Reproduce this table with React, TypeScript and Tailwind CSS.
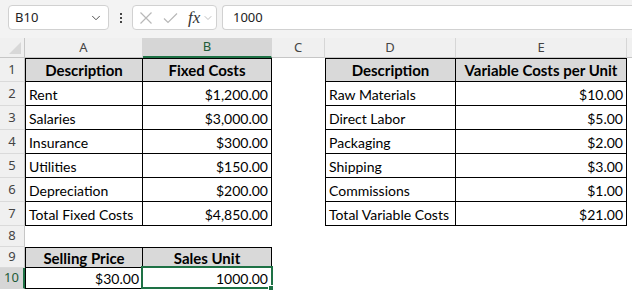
import { ChevronDown } from 'lucide-react';

type Row = { n: number; cells: (string | null)[]; header?: boolean };

// columns: A, B, C, D, E
const ROWS: Row[] = [
  { n: 1, header: true, cells: ['Description', 'Fixed Costs', null, 'Description', 'Variable Costs per Unit'] },
  { n: 2, cells: ['Rent', '$1,200.00', null, 'Raw Materials', '$10.00'] },
  { n: 3, cells: ['Salaries', '$3,000.00', null, 'Direct Labor', '$5.00'] },
  { n: 4, cells: ['Insurance', '$300.00', null, 'Packaging', '$2.00'] },
  { n: 5, cells: ['Utilities', '$150.00', null, 'Shipping', '$3.00'] },
  { n: 6, cells: ['Depreciation', '$200.00', null, 'Commissions', '$1.00'] },
  { n: 7, cells: ['Total Fixed Costs', '$4,850.00', null, 'Total Variable Costs', '$21.00'] },
  { n: 8, cells: [null, null, null, null, null] },
  { n: 9, header: true, cells: ['Selling Price', 'Sales Unit', null, null, null] },
  { n: 10, cells: ['$30.00', '1000.00', null, null, null] },
];

const COLS = ['A', 'B', 'C', 'D', 'E'];

function isMoney(s: string) {
  return s.startsWith('$') || /^[0-9]/.test(s);
}

function Cell({ text, header, top, left, selected }: { text: string | null; header?: boolean; top?: boolean; left?: boolean; selected?: boolean }) {
  if (text === null) return <div />;
  const align = header ? 'justify-center' : isMoney(text) ? 'justify-end' : 'justify-start';
  return (
    <div
      className={`relative flex items-center border-r border-b border-black px-[3px] pt-[1px] text-black whitespace-nowrap ${align} ${
        header ? 'bg-[#d9d9d9] text-[15px] font-bold' : 'bg-white text-[14px]'
      } ${top ? 'border-t' : ''} ${left ? 'border-l' : ''}`}
    >
      {text}
      {selected && (
        <>
          <div className="pointer-events-none absolute -top-[2px] -left-[2px] -right-[2px] -bottom-[1px] border-2 border-[#1e7145]" />
          <div className="absolute -right-[3px] -bottom-[3px] h-[6px] w-[6px] border border-white bg-[#1e7145]" />
        </>
      )}
    </div>
  );
}

export default function App() {
  return (
    <div className="h-[291px] w-[632px] overflow-hidden bg-white" style={{ fontFamily: 'Lato, "Noto Sans", sans-serif' }}>
      {/* formula bar */}
      <div className="flex h-[38px] items-start gap-[2px] bg-[#f3f3f3] pt-[5px] pl-[8px]" style={{ fontFamily: '"Noto Sans", "Open Sans", sans-serif' }}>
        <div className="flex h-[25px] w-[101px] items-center justify-between rounded-[4px] border border-[#d1d1d1] bg-white pl-[6px] pr-[5px] text-[13px] text-[#222]">
          <span>B10</span>
          <ChevronDown size={14} strokeWidth={1.6} className="text-[#444]" />
        </div>
        <div className="flex h-[25px] w-[19px] flex-col items-center justify-center gap-[2px]">
          <span className="h-[2px] w-[2px] bg-[#444]" />
          <span className="h-[2px] w-[2px] bg-[#444]" />
          <span className="h-[2px] w-[2px] bg-[#444]" />
        </div>
        <div className="flex h-[25px] w-[85px] items-center rounded-[4px] border border-[#d1d1d1] bg-white pl-[6px]">
          <svg width="14" height="14" viewBox="0 0 14 14" className="mr-[10px]">
            <path d="M1.5 1.5 L12.5 12.5 M12.5 1.5 L1.5 12.5" stroke="#b8b8b8" strokeWidth="1.2" fill="none" />
          </svg>
          <svg width="15" height="12" viewBox="0 0 15 12" className="mr-[10px]">
            <path d="M1 6.5 L5 10.5 L14 1.5" stroke="#b8b8b8" strokeWidth="1.2" fill="none" />
          </svg>
          <span className="mr-[2px] text-[17px] italic leading-none text-[#333]" style={{ fontFamily: '"Liberation Serif", serif' }}>
            fx
          </span>
          <ChevronDown size={12} strokeWidth={1.5} className="text-[#a8a8a8]" />
        </div>
        <div className="ml-[3px] flex h-[25px] flex-1 items-center rounded-l-[4px] border border-r-0 border-[#d1d1d1] bg-white pl-[10px] text-[13px] text-[#222]">
          1000
        </div>
      </div>

      {/* sheet */}
      <div className="grid grid-cols-[25px_118px_129px_53px_131px_171px_1fr] grid-rows-[20px_24px_24px_24px_24px_24px_24px_24px_21px_21px_21px_1fr] text-black">
        {/* corner */}
        <div className="relative border-r border-b border-[#c6c6c6] bg-[#f0f0f0]">
          <svg width="12" height="12" viewBox="0 0 12 12" className="absolute right-[3px] bottom-[3px]">
            <path d="M12 0 L12 12 L0 12 Z" fill="#d8d8d8" />
          </svg>
        </div>
        {COLS.map((c) => (
          <div
            key={c}
            className={`flex items-center justify-center border-r text-[13px] ${
              c === 'B'
                ? 'border-b-2 border-r-[#d6d6d6] border-b-[#1e7145] bg-[#d6d6d6] text-[#1e5c38]'
                : 'border-b border-r-[#d6d6d6] border-b-[#c6c6c6] bg-[#f0f0f0] text-[#444]'
            }`}
            style={{ fontFamily: '"Noto Sans", "Open Sans", sans-serif' }}
          >
            {c}
          </div>
        ))}
        <div className="border-b border-[#c6c6c6] bg-[#f0f0f0]" />

        {ROWS.map((r) => (
          <div key={r.n} className="contents">
            <div
              className={`flex items-center justify-center border-b text-[13px] ${
                r.n === 10
                  ? 'border-r-2 border-b-[#d6d6d6] border-r-[#1e7145] bg-[#d6d6d6] text-[#1e5c38]'
                  : 'border-r border-b-[#dadada] border-r-[#c6c6c6] bg-[#f0f0f0] text-[#444]'
              }`}
              style={{ fontFamily: '"Noto Sans", "Open Sans", sans-serif' }}
            >
              {r.n}
            </div>
            {r.cells.map((t, i) => (
              <Cell
                key={i}
                text={t}
                header={r.header}
                top={r.n === 1 || r.n === 9}
                left={i === 0 || i === 3}
                selected={r.n === 10 && i === 1}
              />
            ))}
            <div />
          </div>
        ))}

        {/* row 11 partial */}
        <div className="border-r border-[#c6c6c6] bg-[#f0f0f0]" />
      </div>
    </div>
  );
}
